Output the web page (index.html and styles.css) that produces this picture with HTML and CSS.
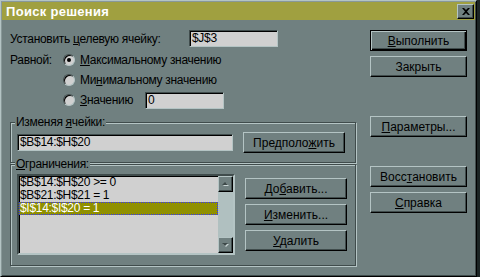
FILE: index.html
```html
<!DOCTYPE html>
<html lang="ru">
<head>
  <meta charset="UTF-8" />
  <title>Поиск решения</title>
  <link rel="stylesheet" href="styles.css">
</head>
<body>
  <div class="window" role="dialog" aria-label="Поиск решения">
    <div class="titlebar">
      <span class="title">Поиск решения</span>
      <button type="button" class="close" aria-label="Закрыть">
        <svg width="8" height="7" viewBox="0 0 8 7" aria-hidden="true">
          <path d="M0 0h2l2 2 2-2h2L5 3.5 8 7H6L4 5 2 7H0l3-3.5z" fill="#000"/>
        </svg>
      </button>
    </div>

    <div class="content">
      <div class="main">
        <div class="row target-row">
          <span class="target-label">Установить <u>ц</u>елевую ячейку:</span>
          <div class="field target-field">$J$3</div>
        </div>

        <div class="equal">
          <span class="equal-label">Равной:</span>
          <div class="options">
            <div class="option">
              <span class="radio checked"></span>
              <span><u>М</u>аксимальному значению</span>
            </div>
            <div class="option">
              <span class="radio"></span>
              <span>Ми<u>н</u>имальному значению</span>
            </div>
            <div class="option">
              <span class="radio"></span>
              <span class="value-text"><u>З</u>начению</span>
              <div class="field value-field">0</div>
            </div>
          </div>
        </div>

        <div class="group changing">
          <div class="group-title">Изменяя <u>я</u>чейки:</div>
          <div class="group-row">
            <div class="field cells-field">$B$14:$H$20</div>
            <button type="button" class="btn">Предполо<u>ж</u>ить</button>
          </div>
        </div>

        <div class="group limits">
          <div class="group-title"><u>О</u>граничения:</div>
          <div class="group-row limits-row">
            <div class="listbox">
              <ul class="items">
                <li>$B$14:$H$20 &gt;= 0</li>
                <li>$B$21:$H$21 = 1</li>
                <li class="selected">$I$14:$I$20 = 1</li>
              </ul>
              <div class="scrollbar">
                <span class="scroll-btn">
                  <svg width="7" height="5" viewBox="0 0 7 5" aria-hidden="true">
                    <path d="M1 4h6L4 1z" fill="#c8d4d4"/>
                    <path d="M0 3h6L3 0z" fill="#3e4a4a"/>
                  </svg>
                </span>
                <span class="scroll-track"></span>
                <span class="scroll-btn">
                  <svg width="7" height="5" viewBox="0 0 7 5" aria-hidden="true">
                    <path d="M1 1h6L4 4z" fill="#c8d4d4"/>
                    <path d="M0 0h6L3 3z" fill="#3e4a4a"/>
                  </svg>
                </span>
              </div>
            </div>
            <div class="limit-buttons">
              <button type="button" class="btn">До<u>б</u>авить...</button>
              <button type="button" class="btn"><u>И</u>зменить...</button>
              <button type="button" class="btn"><u>У</u>далить</button>
            </div>
          </div>
        </div>
      </div>

      <div class="side">
        <button type="button" class="btn default"><u>В</u>ыполнить</button>
        <button type="button" class="btn">Закрыть</button>
        <button type="button" class="btn params"><u>П</u>араметры...</button>
        <button type="button" class="btn restore">Восс<u>т</u>ановить</button>
        <button type="button" class="btn"><u>С</u>правка</button>
      </div>
    </div>
  </div>
</body>
</html>
```

FILE: styles.css
```css
*, *::before, *::after {
  box-sizing: border-box;
}
body {
  margin: 0;
  background: #1c2424;
  font-family: "Liberation Sans", Arial, sans-serif;
  font-size: 12px;
  letter-spacing: -0.3px;
  color: #000;
}
u {
  text-decoration-thickness: 1px;
  text-underline-offset: 1px;
}

/* Window frame */
.window {
  width: 477px;
  height: 277px;
  background: #708080;
  border: 1px solid;
  border-color: #b4c4c4 #000 #000 #b4c4c4;
  box-shadow: inset 1px 1px 0 #889898, inset -1px -1px 0 #404c4c;
  padding: 1px;
}
.titlebar {
  height: 18px;
  background: #a0a040;
  display: flex;
  align-items: center;
  justify-content: space-between;
  padding: 0 1px 0 4px;
}
.title {
  color: #fff;
  font-weight: 700;
  font-size: 13px;
  letter-spacing: 0.3px;
}
.close {
  width: 17px;
  height: 15px;
  padding: 0;
  background: #708080;
  border: 1px solid;
  border-color: #b4c4c4 #000 #000 #b4c4c4;
  box-shadow: inset -1px -1px 0 #404c4c;
  display: flex;
  align-items: center;
  justify-content: center;
}

/* Content layout */
.content {
  display: flex;
  gap: 14px;
  padding-left: 8px;
}
.main {
  width: 346px;
  display: flex;
  flex-direction: column;
}
.row {
  display: flex;
  align-items: center;
}
.target-row {
  margin-top: 10px;
  height: 17px;
}
.target-label {
  width: 179px;
}
.field {
  height: 17px;
  background: #d0d0d0;
  border: 1px solid;
  border-color: #404c4c #b4c4c4 #b4c4c4 #404c4c;
  box-shadow: inset 1px 1px 0 #000;
  padding: 0 2px;
  line-height: 15px;
  white-space: nowrap;
}
.target-field {
  width: 89px;
}
.equal {
  display: flex;
  margin-top: 3px;
}
.equal-label {
  width: 53px;
  line-height: 20px;
}
.options {
  display: flex;
  flex-direction: column;
}
.option {
  height: 20px;
  display: flex;
  align-items: center;
  gap: 5px;
}
.radio {
  width: 12px;
  height: 12px;
  border-radius: 50%;
  background: #d0d0d0;
  border: 1px solid;
  border-color: #404c4c #b4c4c4 #b4c4c4 #404c4c;
  box-shadow: inset 1px 1px 0 #000;
  display: flex;
  align-items: center;
  justify-content: center;
}
.radio.checked::after {
  content: "";
  width: 4px;
  height: 4px;
  border-radius: 50%;
  background: #000;
}
.value-text {
  width: 60px;
}
.value-field {
  width: 79px;
}

/* Group boxes */
.group {
  border: 1px solid #404c4c;
  box-shadow: 1px 1px 0 #b4c4c4, inset 1px 1px 0 #b4c4c4;
  padding: 0 0 0 6px;
}
.group-title {
  height: 14px;
  line-height: 14px;
  margin: -8px 0 0 -2px;
  padding: 0 1px;
  background: #708080;
  width: fit-content;
}
.changing {
  margin-top: 12px;
  height: 41px;
}
.changing .group-row {
  margin-top: 3px;
}
.group-row {
  display: flex;
  align-items: center;
  gap: 10px;
}
.cells-field {
  width: 216px;
}
.limits {
  margin-top: 1px;
  height: 102px;
}
.limits-row {
  align-items: flex-start;
  margin-top: 3px;
}

/* Buttons */
.btn {
  width: 102px;
  height: 21px;
  padding: 0;
  background: #708080;
  font: inherit;
  color: #000;
  border: 1px solid;
  border-color: #b4c4c4 #000 #000 #b4c4c4;
  box-shadow: inset -1px -1px 0 #404c4c;
  text-align: center;
}
.btn.default {
  border-color: #000;
  box-shadow: inset 1px 1px 0 #b4c4c4, inset -1px -1px 0 #000, inset -2px -2px 0 #404c4c;
}

/* List with scrollbar */
.listbox {
  width: 218px;
  height: 81px;
  display: flex;
  background: #d0d0d0;
  border: 2px solid;
  border-color: #404c4c #b4c4c4 #b4c4c4 #404c4c;
  box-shadow: inset 1px 1px 0 #000;
}
.items {
  list-style: none;
  margin: 0;
  padding: 0;
  flex: 1;
}
.items li {
  height: 13px;
  line-height: 13px;
  padding-left: 1px;
  white-space: nowrap;
}
.items li.selected {
  background: #909000;
  color: #fff;
  outline: 1px dotted #3030ff;
  outline-offset: -1px;
}
.scrollbar {
  width: 15px;
  display: flex;
  flex-direction: column;
  background: #b0c0c0;
}
.scroll-btn {
  height: 16px;
  background: #708080;
  border: 1px solid;
  border-color: #b4c4c4 #000 #000 #b4c4c4;
  box-shadow: inset -1px -1px 0 #404c4c;
  display: flex;
  align-items: center;
  justify-content: center;
}
.scroll-track {
  flex: 1;
}
.limit-buttons {
  display: flex;
  flex-direction: column;
  gap: 5px;
  padding-top: 4px;
}

/* Right column */
.side {
  display: flex;
  flex-direction: column;
  gap: 5px;
  padding-top: 10px;
}
.side .btn {
  width: 97px;
}
.side .params {
  margin-top: 34px;
}
.side .restore {
  margin-top: 24px;
}
```
